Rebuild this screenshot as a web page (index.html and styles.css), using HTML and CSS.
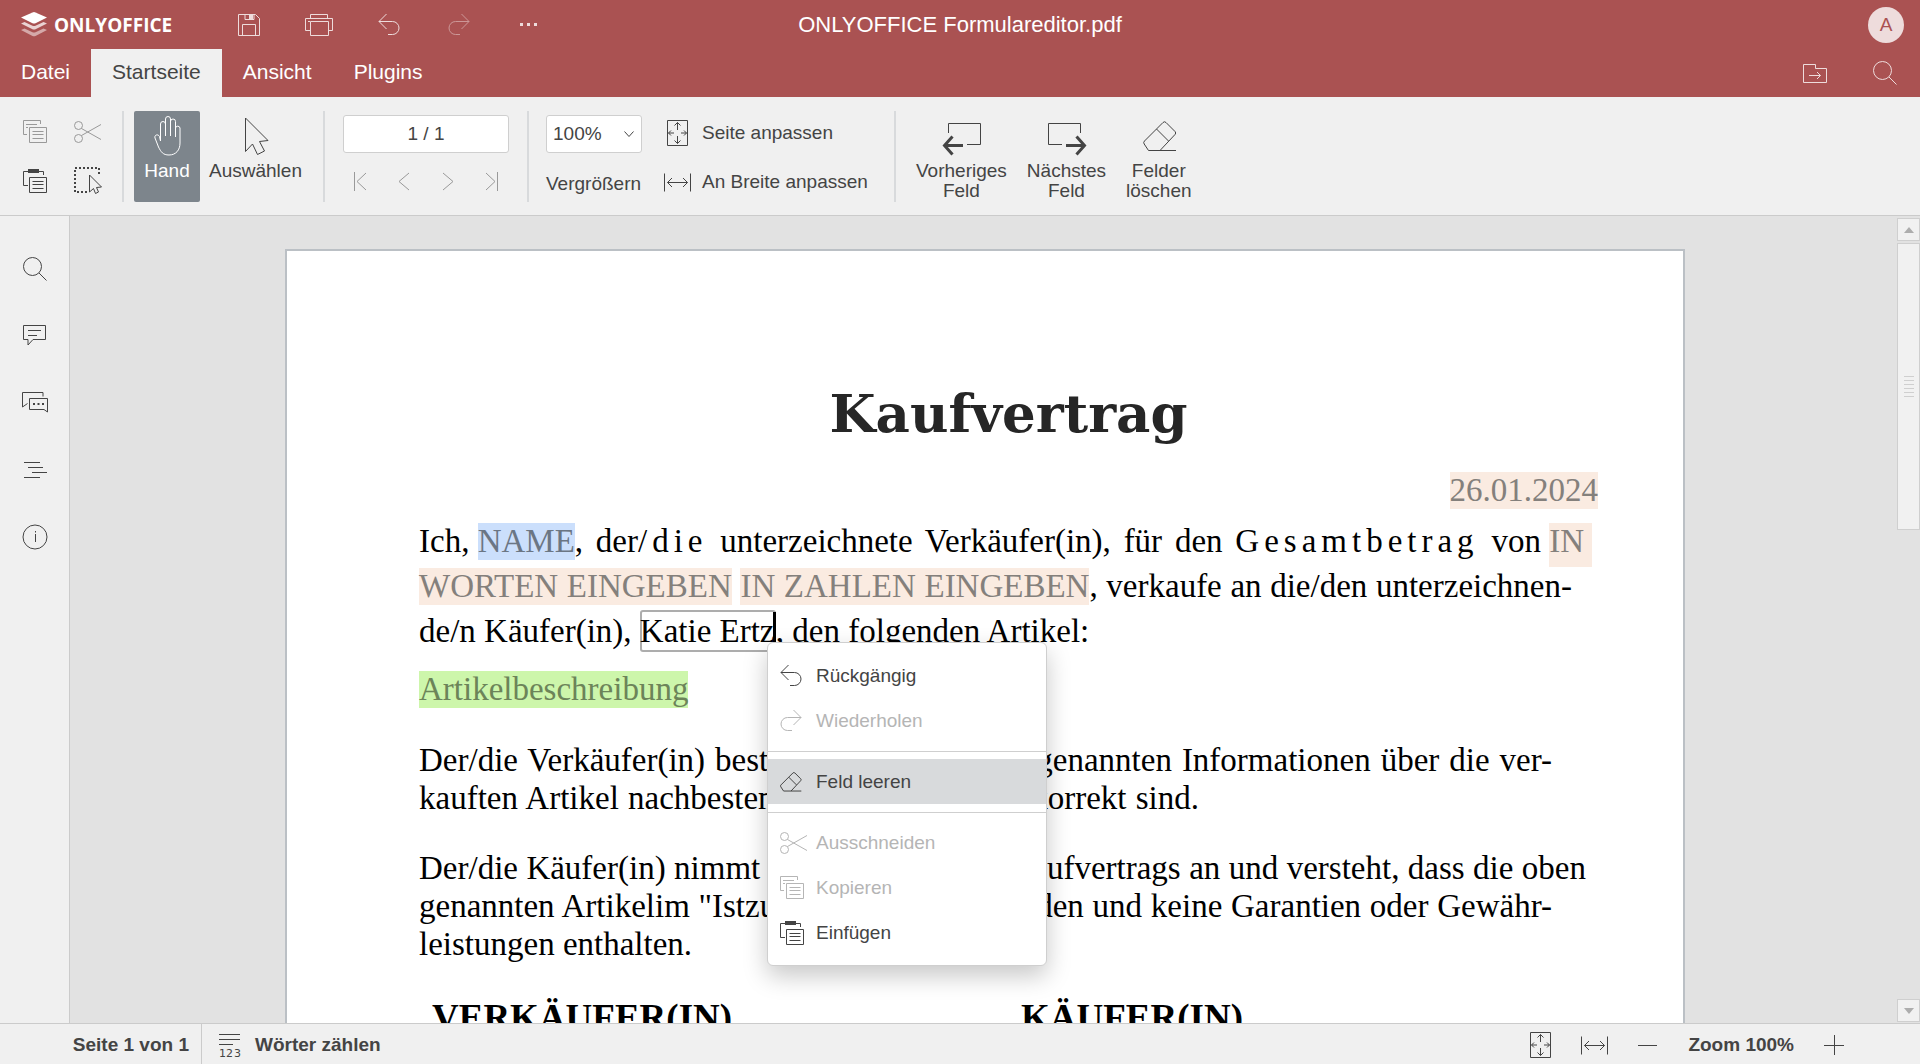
FILE: index.html
```html
<!DOCTYPE html>
<html lang="de">
<head>
<meta charset="utf-8">
<meta name="viewport" content="width=device-width, initial-scale=1">
<title>ONLYOFFICE Formulareditor.pdf</title>
<link rel="stylesheet" href="styles.css">
</head>
<body>
<svg class="sprite" aria-hidden="true">
  <symbol id="copy" viewBox="0 0 24 24"><path d="M4 14.500H.5V.5h17V4M3 4.500h11M3 7.500h2M6.500 7.500h17v15h-17zM9.500 11.500h11M9.500 14.500h11M9.500 18.500h11"/></symbol>
  <symbol id="paste" viewBox="0 0 24 24"><path d="M5 16.500H.5v-14h5M16 2.500h4.500V6M6.500 8.500h17v15h-17zM9.500 12.500h11M9.500 15.500h11M9.500 19.500h11"/><path class="solid" d="M5 0h11v4H5z"/></symbol>
  <symbol id="cut" viewBox="0 0 28 22"><circle cx="4.500" cy="4.500" r="4"/><circle cx="4.500" cy="17.500" r="4"/><path d="M7.500 7.500 27 18.500M7.500 14.500 27 3.500"/></symbol>
  <symbol id="undo" viewBox="0 0 22 22"><path d="M8.500 0 1 7.500 8.500 15M1 7.500h13.500a6.500 6.500 0 0 1 0 13H10"/></symbol>
  <symbol id="redo" viewBox="0 0 22 22"><path d="M13.500 0 21 7.500 13.500 15M21 7.500H7.500a6.500 6.500 0 0 0 0 13H12"/></symbol>
  <symbol id="eraser" viewBox="0 0 34 31"><path d="M5.500 29.500H33M17 29.500 32 13.500q1.500-1.500 0-3L23 1.500q-1.500-1.500-3 0L1.500 20q-1.500 1.500-.3 3l4.300 6.500M13.500 8l12 12"/></symbol>
  <symbol id="fit-page" viewBox="0 0 21 26"><path d="M.5.500h20v25H.5zM10.500 10V2.500M7.500 5.500l3-3 3 3M10.500 16v7.500M7.500 20.500l3 3 3-3M7 13H1.500M4 10.500 1.500 13 4 15.500M14 13h5.500M17 10.500l2.500 2.500-2.500 2.500"/></symbol>
  <symbol id="fit-width" viewBox="0 0 27 19"><path d="M.5.500v18M26.500.500v18M3.500 9.500h20M8 5 3.500 9.500 8 14M19 5l4.500 4.500L19 14"/></symbol>
  <symbol id="search" viewBox="0 0 24 24"><circle cx="9.500" cy="9.500" r="9"/><path d="m16 16 7.500 7.500"/></symbol>
</svg>

<div class="app">
  <header class="header">
    <div class="titlebar">
      <div class="titlebar-left">
        <a class="brand" href="#">
          <svg width="26" height="25" viewBox="0 0 26 25" aria-hidden="true"><path fill="#fff" d="M11.500.4q1.500-.6 3 0L26 5.600 14.500 11.300q-1.500.6-3 0L0 5.600z"/><path fill="#fff" opacity=".75" d="m0 11.500 3.500-1.600 8 3.800q1.500.6 3 0l8-3.800 3.500 1.600-11.500 5.700q-1.500.6-3 0z"/><path fill="#fff" opacity=".5" d="m0 18 3.500-1.600 8 3.800q1.500.6 3 0l8-3.800L26 18l-11.500 5.900q-1.500.6-3 0z"/></svg>
          <span>ONLYOFFICE</span>
        </a>
        <button class="head-btn" aria-label="Speichern"><svg width="24" height="24" viewBox="0 0 24 24"><path d="M1.500 1.500h17l4 4v17h-21zM5.500 22V11.500h13V22M8 1.500v5h9v-5"/><path class="solid" d="M12 2h4v4h-4z"/></svg></button>
        <button class="head-btn" aria-label="Drucken"><svg width="28" height="24" viewBox="0 0 28 24"><path d="M5 17.500H.5v-12h27v12H23M5.500 5V1.500h17V5M3 8.500h2M5.500 8.500h18v14h-18z"/></svg></button>
        <button class="head-btn" aria-label="Rückgängig machen"><svg width="22" height="22"><use href="#undo"/></svg></button>
        <button class="head-btn" aria-label="Wiederherstellen" disabled><svg width="22" height="22"><use href="#redo"/></svg></button>
        <button class="head-btn" aria-label="Mehr"><svg width="18" height="3" viewBox="0 0 18 3"><path class="solid" d="M0 0h3v3H0zM7 0h3v3H7zM14 0h3v3h-3z"/></svg></button>
      </div>
      <h1 class="doc-name">ONLYOFFICE Formulareditor.pdf</h1>
      <div class="titlebar-right"><button class="avatar" aria-label="Benutzer">A</button></div>
    </div>
    <div class="tabbar">
      <nav class="tabs">
        <button class="tab">Datei</button>
        <button class="tab active">Startseite</button>
        <button class="tab">Ansicht</button>
        <button class="tab">Plugins</button>
      </nav>
      <div class="tab-tools">
        <button class="head-btn" aria-label="Dateispeicherort öffnen"><svg width="24" height="19" viewBox="0 0 24 19"><path d="M.5 18.500V.500h12v4h11v14zM6 11.500h11.500M14 8l3.500 3.500L14 15"/></svg></button>
        <button class="head-btn" aria-label="Suchen"><svg width="24" height="24"><use href="#search"/></svg></button>
      </div>
    </div>
  </header>

  <section class="toolbar" aria-label="Startseite">
    <div class="group clip-tools">
      <button class="icon-btn" aria-label="Kopieren" disabled><svg width="24" height="24"><use href="#copy"/></svg></button>
      <button class="icon-btn" aria-label="Ausschneiden" disabled><svg width="28" height="22"><use href="#cut"/></svg></button>
      <button class="icon-btn" aria-label="Einfügen"><svg width="24" height="24"><use href="#paste"/></svg></button>
      <button class="icon-btn" aria-label="Alles auswählen"><svg width="30" height="28" viewBox="0 0 30 28"><path stroke-dasharray="2 2" stroke-width="2" d="M14 25H2V1h24v8"/><path d="M16.500 8v17l4-3.500 2 5 3-1.500-2-4.500 5-.5z" fill="#f0f0f0"/></svg></button>
    </div>
    <div class="group mode-tools">
      <button class="big-btn pressed"><svg width="27" height="40" viewBox="0 0 27 40"><path d="M6.500 25V8a2.500 2.500 0 0 1 5 0v12M11.500 8V3a2.500 2.500 0 0 1 5 0v17M16.500 5.500a2.500 2.500 0 0 1 5 0V21M21.500 12a2.300 2.300 0 0 1 4.500 0v15c0 7-4 12-11 12-6 0-8-3-10.500-8L1 22c-1-3 3-4.500 4.500-1.500l1 4.500"/></svg><span>Hand</span></button>
      <button class="big-btn"><svg width="23" height="40" viewBox="0 0 23 40"><path d="M1.500 2v33.500l7-7.500 5 10.500 7-3.500-5-9.500 8.500-1z"/></svg><span>Auswählen</span></button>
    </div>
    <div class="group page-tools">
      <input class="page-box" aria-label="Seite" value="1 / 1">
      <div class="pager">
        <button aria-label="Erste Seite"><svg width="14" height="19" viewBox="0 0 14 19"><path d="M1.500 0v19M13 1 4 9.500l9 8.500"/></svg></button>
        <button aria-label="Vorherige Seite"><svg width="14" height="19" viewBox="0 0 14 19"><path d="M12 1 2 9.500 12 18"/></svg></button>
        <button aria-label="Nächste Seite"><svg width="14" height="19" viewBox="0 0 14 19"><path d="m2 1 10 8.500L2 18"/></svg></button>
        <button aria-label="Letzte Seite"><svg width="14" height="19" viewBox="0 0 14 19"><path d="M12.500 0v19M1 1l9 8.500L1 18"/></svg></button>
      </div>
    </div>
    <div class="group zoom-tools">
      <div class="zoom-col">
        <div class="select-wrap">
          <select id="zoom"><option>100%</option></select>
          <svg width="12" height="8" viewBox="0 0 12 8"><path d="m1.500 1.500 4.500 5 4.500-5"/></svg>
        </div>
        <label for="zoom">Vergrößern</label>
      </div>
      <div class="fit-col">
        <button class="text-btn"><span class="fit-icon"><svg width="21" height="26"><use href="#fit-page"/></svg></span>Seite anpassen</button>
        <button class="text-btn"><span class="fit-icon"><svg width="27" height="19"><use href="#fit-width"/></svg></span>An Breite anpassen</button>
      </div>
    </div>
    <div class="group field-tools">
      <button class="big-btn"><svg width="36" height="40" viewBox="0 -6 36 40"><path d="M5.500 11V1.500h32v21H24"/><path stroke-width="3" d="M20 23.500H2M9.500 14.500l-8 9 8 9"/></svg><span>Vorheriges<br>Feld</span></button>
      <button class="big-btn"><svg width="36" height="40" viewBox="0 -6 36 40"><path d="M32.500 11V1.500H.5v21H14"/><path stroke-width="3" d="M18 23.500h18M28.500 14.500l8 9-8 9"/></svg><span>Nächstes<br>Feld</span></button>
      <button class="big-btn"><svg width="32" height="40" viewBox="0 0 32 40"><use href="#eraser" y="5" width="34" height="31"/></svg><span>Felder<br>löschen</span></button>
    </div>
  </section>

  <div class="workspace">
    <aside class="sidebar">
      <button aria-label="Suchen"><svg width="24" height="24"><use href="#search"/></svg></button>
      <button aria-label="Kommentare"><svg width="23" height="21" viewBox="0 0 23 21"><path d="M.5.500h22v14H10l-5 5.500v-5.500H.5zM5 5.500h13M5 10.500h9"/></svg></button>
      <button aria-label="Chat"><svg width="26" height="21" viewBox="0 0 26 21"><path d="M5.500 11.500.5 15V.500h20.500v4M7.500 6.500h18V20l-3.500-2.500H7.500z"/><path class="solid" d="M11 11h2v2h-2zM15.500 11h2v2h-2zM20 11h2v2h-2z"/></svg></button>
      <button aria-label="Navigation"><svg width="22" height="16" viewBox="0 0 22 16"><path d="M0 .500h16M4 5.500h15M8 10.500h15M0 15.500h16"/></svg></button>
      <button aria-label="Über"><svg width="24" height="26" viewBox="1 0 24 26"><circle cx="13" cy="13" r="12"/><path d="M13.500 10v8M13.500 7v1.500"/></svg></button>
    </aside>

    <main class="viewer">
      <article class="page">
        <h2 class="doc-title">Kaufvertrag</h2>
        <p class="date"><span class="field peach">26.01.2024</span></p>
        <p class="intro">
          <span class="line full"><span class="keep">Ich, <span class="field blue">NAME</span>,</span> der<span class="spaced">/die</span> unterzeichnete Verkäufer(in), für den <span class="spaced">Gesamtbetrag</span> <span class="keep">von <span class="field peach open">IN</span></span></span>
          <span class="line mid"><span class="field peach">WORTEN EINGEBEN</span> <span class="field peach">IN ZAHLEN EINGEBEN</span>, verkaufe an die/den unterzeichnen-</span>
          <span class="line loose">de/n Käufer(in), <span class="edit"><input aria-label="Käufer(in)" value="Katie Ertz"><i class="caret"></i></span>, den folgenden Artikel:</span>
        </p>
        <p class="article"><span class="field green">Artikelbeschreibung</span></p>
        <p class="clause">
          <span class="line narrow">Der/die Verkäufer(in) bestätigt, dass die oben genannten Informationen über die ver-</span>
          <span class="line short">kauften Artikel nachbestem Wissen wahr und korrekt sind.</span>
        </p>
        <p class="clause">
          <span class="line wide">Der/die Käufer(in) nimmt die Regeln dieses Kaufvertrags an und versteht, dass die oben</span>
          <span class="line narrow">genannten Artikelim "Istzustand" verkauft werden und keine Garantien oder Gewähr-</span>
          <span class="line loose">leistungen enthalten.</span>
        </p>
        <div class="parties"><h3>VERKÄUFER(IN)</h3><h3>KÄUFER(IN)</h3></div>

        <div class="menu" role="menu">
          <button role="menuitem"><svg width="22" height="22"><use href="#undo"/></svg>Rückgängig</button>
          <button role="menuitem" disabled><svg width="22" height="22"><use href="#redo"/></svg>Wiederholen</button>
          <hr>
          <button role="menuitem" class="hover"><svg width="22" height="20"><use href="#eraser"/></svg>Feld leeren</button>
          <hr>
          <button role="menuitem" disabled><svg width="28" height="22"><use href="#cut"/></svg>Ausschneiden</button>
          <button role="menuitem" disabled><svg width="24" height="24"><use href="#copy"/></svg>Kopieren</button>
          <button role="menuitem"><svg width="24" height="24"><use href="#paste"/></svg>Einfügen</button>
        </div>
      </article>
    </main>

    <div class="scrollbar">
      <button aria-label="Nach oben"><svg width="10" height="6" viewBox="0 0 10 6"><path class="solid" d="m5 0 5 6H0z"/></svg></button>
      <div class="track"><div class="thumb"><i></i><i></i><i></i><i></i><i></i><i></i></div></div>
      <button aria-label="Nach unten"><svg width="10" height="6" viewBox="0 0 10 6"><path class="solid" d="M5 6 0 0h10z"/></svg></button>
    </div>
  </div>

  <footer class="statusbar">
    <button class="page-info">Seite 1 von 1</button>
    <button class="count"><svg width="22" height="25" viewBox="0 0 22 25"><path d="M0 1.500h21M0 6.500h21M0 11.500h14"/><text x="0" y="24">1</text><text x="7" y="24">2</text><text x="15" y="24">3</text></svg>Wörter zählen</button>
    <div class="status-zoom">
      <button aria-label="Seite anpassen"><svg width="21" height="26"><use href="#fit-page"/></svg></button>
      <button aria-label="An Breite anpassen"><svg width="27" height="19"><use href="#fit-width"/></svg></button>
      <button aria-label="Verkleinern"><svg width="20" height="20" viewBox="0 0 20 20"><path d="M0 10.500h19"/></svg></button>
      <button class="zoom-label">Zoom 100%</button>
      <button aria-label="Vergrößern"><svg width="20" height="20" viewBox="0 0 20 20"><path d="M0 10.500h20M10.500 0v20"/></svg></button>
    </div>
  </footer>
</div>
</body>
</html>
```
FILE: styles.css
```css
* { box-sizing: border-box; }

body {
  margin: 0;
  font: 19px/20px "Liberation Sans", Arial, sans-serif;
  color: #444;
}

h1, h2, h3, p { margin: 0; }

button, input, select { font: inherit; color: inherit; margin: 0; }

button {
  display: flex;
  align-items: center;
  justify-content: center;
  padding: 0;
  border: 0;
  background: none;
  white-space: nowrap;
}

svg {
  flex: none;
  fill: none;
  stroke: currentColor;
  overflow: visible;
}

svg path, svg circle { vector-effect: non-scaling-stroke; }
.solid { fill: currentColor; stroke: none; }
.sprite { position: absolute; width: 0; height: 0; }

.app {
  display: flex;
  flex-direction: column;
  height: 100vh;
  overflow: hidden;
  background: #f0f0f0;
}

/* Header */
.header { background: #aa5252; color: #fff; }

.titlebar {
  display: grid;
  grid-template-columns: 1fr auto 1fr;
  align-items: center;
  height: 49px;
}

.titlebar-left { display: flex; align-items: center; }

.brand {
  display: flex;
  align-items: center;
  gap: 7px;
  width: 214px;
  padding-left: 21px;
  color: #fff;
  font: 700 19px/24px "Open Sans", sans-serif;
  text-decoration: none;
}

.brand svg { stroke: none; }

.head-btn { width: 70px; height: 48px; color: #eedcdc; }
.head-btn:disabled { color: #cc9797; }

.doc-name { font-size: 22px; line-height: 26px; font-weight: 400; }

.titlebar-right { display: flex; justify-content: flex-end; padding-right: 16px; }

.avatar {
  width: 36px;
  height: 36px;
  border-radius: 50%;
  background: #eedcdc;
  color: #aa5252;
}

.tabbar { display: flex; justify-content: space-between; }
.tabs, .tab-tools { display: flex; }

.tab {
  height: 48px;
  padding: 0 21px 2px;
  font-size: 21px;
}

.tab.active { background: #f0f0f0; color: #444; }

/* Toolbar */
.toolbar {
  display: flex;
  padding: 14px 0 13px;
  border-bottom: 1px solid #cbcbcb;
  overflow: hidden;
}

.group { flex: none; height: 91px; border-right: 2px solid #d8dadc; }

.clip-tools {
  display: grid;
  grid-template-columns: 26px 30px;
  grid-template-rows: 24px 28px;
  gap: 23px 25px;
  width: 124px;
  padding: 9px 0 0 22px;
}

.icon-btn:disabled, .pager button { color: #999; }

.mode-tools { display: flex; gap: 9px; width: 201px; padding-left: 10px; }

.big-btn {
  flex-direction: column;
  justify-content: flex-start;
  height: 91px;
  padding-top: 5px;
  gap: 5px;
  border-radius: 2px;
}

.pressed { width: 66px; background: #7d858c; color: #fff; }

.page-tools { width: 204px; padding: 4px 18px 0 18px; }

.page-box, .select-wrap select {
  display: block;
  width: 100%;
  height: 38px;
  border: 1px solid #cfcfcf;
  border-radius: 3px;
  background: #fff;
}

.page-box { text-align: center; }

.pager { display: flex; justify-content: space-between; padding: 19px 10px 0; }

.zoom-tools { display: flex; gap: 22px; width: 367px; padding: 4px 0 0 17px; }

.zoom-col { width: 96px; }
.zoom-col label { display: block; padding-top: 21px; }
.select-wrap { position: relative; }
.select-wrap select { padding: 0 6px; appearance: none; }
.select-wrap svg { position: absolute; right: 7px; top: 15px; }

.fit-col { display: flex; flex-direction: column; gap: 23px; align-items: flex-start; padding-top: 5px; }
.fit-icon { display: flex; justify-content: center; width: 27px; }
.text-btn { height: 26px; gap: 11px; }

.field-tools { display: flex; gap: 20px; padding-left: 20px; border: 0; }

/* Workspace */
.workspace { display: flex; flex: 1; min-height: 0; background: #e2e2e2; }

.sidebar {
  width: 70px;
  padding-top: 19px;
  border-right: 1px solid #cbcbcb;
  background: #f0f0f0;
}

.sidebar button { width: 100%; height: 67px; }

.viewer {
  display: flex;
  flex: 1;
  justify-content: center;
  align-items: flex-start;
  min-width: 0;
  padding: 33px 0 0 3px;
  overflow: hidden;
}

.page {
  position: relative;
  flex: none;
  width: 1400px;
  padding: 132px 85px 200px 132px;
  border: 2px solid #bbc0c5;
  background: #fff;
  color: #000;
  font: 33px/38px "Liberation Serif", "Times New Roman", serif;
}

.doc-title {
  color: #262626;
  font: 700 53px/60px "DejaVu Serif", serif;
  text-align: center;
}

.date { padding-top: 28px; text-align: right; }
.intro { padding-top: 10px; line-height: 45px; }
.article { padding: 16px 0 1px; }
.clause { padding-top: 32px; }

.line { display: block; white-space: nowrap; text-align-last: justify; }
.line.full { padding-right: 6px; }
.line.wide { padding-right: 12px; }
.line.mid { padding-right: 26px; }
.line.narrow { padding-right: 46px; }
.line.short { max-width: 780px; }
.line.loose { text-align-last: left; }
.keep { display: inline-block; text-align-last: left; }
.spaced { letter-spacing: 5px; }

.field { padding-bottom: 1px; color: #84807c; }
.peach { background: #faebe1; }
.open { padding: 0 8px 8px 0; }
.blue { background: #cbdffc; color: #6b7684; }
.green { background: #cdf6ab; color: #6c8459; }

.edit { position: relative; display: inline-block; height: 42px; line-height: 42px; }

.edit input {
  width: 136px;
  height: 42px;
  padding: 0;
  border: 0;
  border-radius: 3px;
  background: none;
  box-shadow: inset 0 0 0 2px #adadad;
}

.caret {
  position: absolute;
  top: 2px;
  right: 0;
  width: 3px;
  height: 34px;
  background: #000;
}

.parties {
  display: grid;
  grid-template-columns: 589px 1fr;
  padding: 34px 0 0 13px;
}

.parties h3 { font-size: 37px; line-height: 42px; }

/* Context menu */
.menu {
  position: absolute;
  left: 480px;
  top: 391px;
  width: 280px;
  padding: 10px 0;
  border: 1px solid #cfcfcf;
  border-radius: 6px;
  background: #fff;
  box-shadow: 0 10px 24px rgba(0, 0, 0, .22);
  color: #444;
  font: 19px/20px "Liberation Sans", Arial, sans-serif;
}

.menu button {
  display: grid;
  grid-template-columns: 24px 1fr;
  gap: 12px;
  justify-items: start;
  width: 100%;
  height: 45px;
  padding-left: 12px;
}

.menu button:disabled { color: #b5b5b5; }
.menu .hover { background: #d8dadc; }
.menu hr { height: 1px; margin: 8px 0 7px; border: 0; background: #cfcfcf; }

/* Scrollbar */
.scrollbar {
  display: flex;
  flex-direction: column;
  gap: 2px;
  width: 23px;
  padding: 2px 0 1px;
}

.scrollbar button, .thumb { border: 1px solid #cfcfcf; background: #f1f1f1; }
.scrollbar button { height: 23px; color: #adadad; }
.track { flex: 1; }

.thumb {
  display: flex;
  flex-direction: column;
  align-items: center;
  justify-content: center;
  gap: 3px;
  height: 38%;
}

.thumb i { width: 10px; height: 1px; background: #cfcfcf; }

/* Status bar */
.statusbar {
  display: flex;
  height: 41px;
  border-top: 1px solid #cbcbcb;
}

.statusbar button { padding-top: 2px; font-weight: 700; }
.statusbar .page-info {
  justify-content: flex-end;
  width: 202px;
  padding-right: 12px;
  border-right: 1px solid #cbcbcb;
}
.statusbar .count { gap: 14px; padding-left: 17px; }
.count text { fill: currentColor; stroke: none; font: 11px "DejaVu Sans", sans-serif; }
.status-zoom { display: flex; gap: 30px; margin-left: auto; padding-right: 76px; }
```
